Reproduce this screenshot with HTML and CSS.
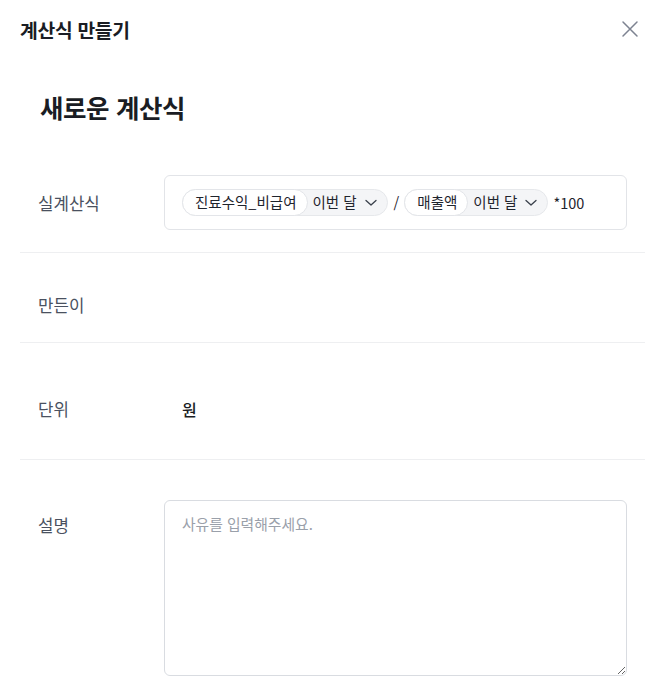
FILE: index.html
```html
<!DOCTYPE html>
<html lang="ko">
<head>
<meta charset="utf-8">
<title>계산식 만들기</title>
<link rel="stylesheet" href="styles.css">
</head>
<body>
<div class="modal">
  <header class="modal-header">
    <h1 class="modal-title">계산식 만들기</h1>
    <button class="close-btn" type="button" aria-label="닫기">
      <svg width="18" height="18" viewBox="0 0 18 18" fill="none" stroke="#7d8391" stroke-width="1.5" stroke-linecap="round"><path d="M2 2L16 16M16 2L2 16"/></svg>
    </button>
  </header>
  <h2 class="page-title">새로운 계산식</h2>
  <div class="form">
    <div class="row row-formula">
      <div class="label">실계산식</div>
      <div class="field">
        <div class="formula-box">
          <span class="chip"><span class="chip-name">진료수익_비급여</span><span class="chip-period">이번 달<svg class="chev" width="12" height="7" viewBox="0 0 12 7" fill="none" stroke="#3a404b" stroke-width="1.3" stroke-linecap="round" stroke-linejoin="round"><path d="M1 1.5l5 4.5 5-4.5"/></svg></span></span>
          <span class="op">/</span>
          <span class="chip"><span class="chip-name">매출액</span><span class="chip-period">이번 달<svg class="chev" width="12" height="7" viewBox="0 0 12 7" fill="none" stroke="#3a404b" stroke-width="1.3" stroke-linecap="round" stroke-linejoin="round"><path d="M1 1.5l5 4.5 5-4.5"/></svg></span></span>
          <span class="op-tail">*100</span>
        </div>
      </div>
    </div>
    <div class="row row-author">
      <div class="label">만든이</div>
      <div class="field"></div>
    </div>
    <div class="row row-unit">
      <div class="label">단위</div>
      <div class="field"><span class="value">원</span></div>
    </div>
    <div class="row row-desc">
      <div class="label label-top">설명</div>
      <div class="field">
        <textarea class="desc" placeholder="사유를 입력해주세요."></textarea>
      </div>
    </div>
  </div>
</div>
</body>
</html>
```

FILE: styles.css
```css
* { box-sizing: border-box; }
html, body { margin: 0; padding: 0; background: #fff; }
body {
  font-family: "Noto Sans CJK KR", "Noto Sans", "Liberation Sans", sans-serif;
  color: #1c1f26;
  overflow: hidden;
}
.modal { width: 660px; }
.modal-header {
  display: flex;
  align-items: center;
  justify-content: space-between;
  padding: 17px 20px 0 20px;
  height: 43px;
}
.modal-title {
  margin: 0;
  font-size: 19.3px;
  line-height: 26px;
  font-weight: 700;
  letter-spacing: -0.3px;
  color: #1a1d24;
}
.close-btn {
  border: 0;
  background: none;
  padding: 0;
  width: 18px;
  height: 18px;
  display: flex;
  margin-top: -2px;
  margin-right: 1px;
  cursor: pointer;
}
.page-title {
  margin: 47px 0 0 40px;
  font-size: 25.5px;
  line-height: 34px;
  font-weight: 700;
  letter-spacing: -0.4px;
  color: #1a1d24;
}
.form {
  margin: 29px 15px 0 20px;
}
.row {
  display: flex;
  align-items: center;
  border-bottom: 1px solid #eeeff1;
  padding-left: 18px;
  padding-right: 18px;
}
.label {
  width: 126px;
  flex: none;
  font-size: 16.8px;
  line-height: 22px;
  height: 22px;
  color: #4a5160;
}
.field { flex: 1; min-width: 0; line-height: 22px; }
.row-formula { padding-top: 22px; padding-bottom: 22px; }
.row-author { padding-top: 41px; padding-bottom: 26px; }
.row-author .field { height: 22px; }
.row-unit { padding-top: 55px; padding-bottom: 39px; }
.row-desc { padding-top: 40px; border-bottom: 0; align-items: flex-start; }
.label-top { margin-top: 14px; }

.formula-box {
  height: 55px;
  border: 1px solid #e2e4e8;
  border-radius: 6px;
  padding: 0 17px;
  display: flex;
  align-items: center;
  font-size: 14.5px;
  color: #1f242d;
}
.chip {
  display: inline-flex;
  align-items: center;
  height: 27px;
  background: #f4f5f7;
  border: 1px solid #e6e8eb;
  border-radius: 14px;
  padding-right: 10px;
}
.chip-name {
  display: inline-flex;
  align-items: center;
  height: 27px;
  margin: -1px 0 -1px -1px;
  padding: 0 10px 0 12px;
  background: #fff;
  border: 1px solid #e3e5e9;
  border-radius: 14px;
  line-height: 1;
}
.chip-period {
  display: inline-flex;
  align-items: center;
  padding-left: 5px;
  line-height: 1;
}
.chev { margin-left: 8px; }
.op { margin: 0 5px 0 6px; }
.op-tail { margin-left: 5px; }
.value {
  display: block;
  height: 22px;
  padding-left: 18px;
  font-size: 16px;
  line-height: 22px;
  font-weight: 500;
  color: #1a1d24;
}
.desc {
  display: block;
  width: 100%;
  height: 176px;
  border: 1px solid #d9dce1;
  border-radius: 6px;
  padding: 12px 17px;
  font-family: inherit;
  font-size: 14.8px;
  line-height: 22px;
  color: #1f242d;
  resize: vertical;
  outline: none;
}
.desc::placeholder { color: #9aa0aa; }
```
